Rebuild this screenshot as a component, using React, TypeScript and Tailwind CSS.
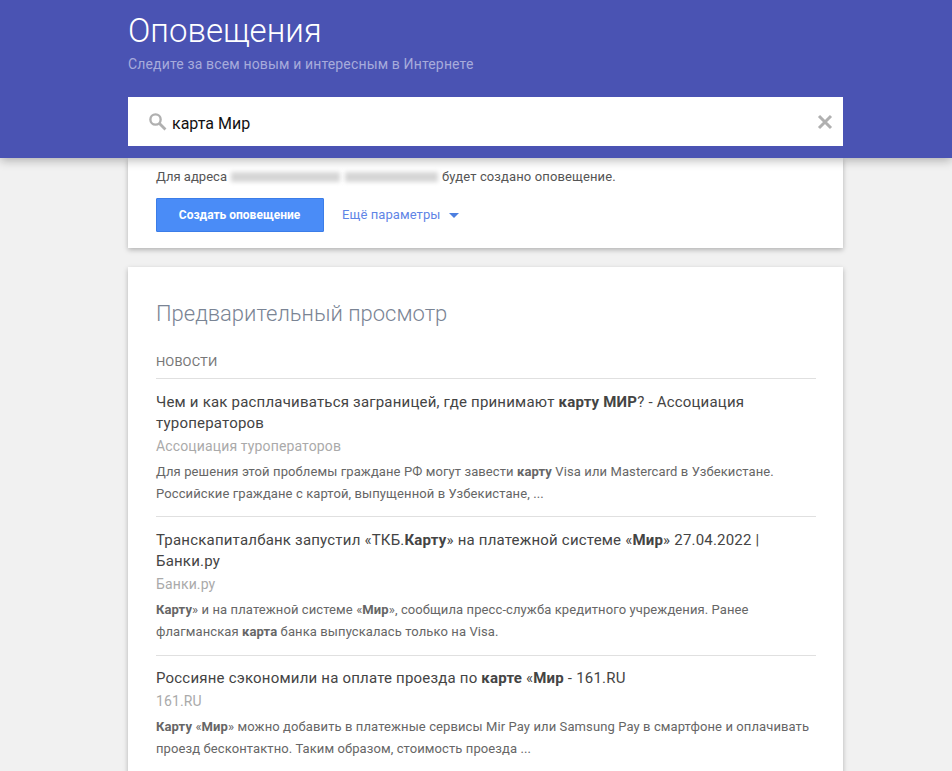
const font = { fontFamily: 'Roboto, "Noto Sans", sans-serif' }

type Story = {
    title: React.ReactNode
    source: string
    snippet: React.ReactNode
}

const stories: Story[] = [
    {
        title: <>Чем и как расплачиваться заграницей, где принимают <b className="font-bold">карту МИР</b>? - Ассоциация туроператоров</>,
        source: 'Ассоциация туроператоров',
        snippet: <>Для решения этой проблемы граждане РФ могут завести <b className="font-bold">карту</b> Visa или Mastercard в Узбекистане. Российские граждане с картой, выпущенной в Узбекистане, ...</>,
    },
    {
        title: <>Транскапиталбанк запустил «ТКБ.<b className="font-bold">Карту</b>» на платежной системе «<b className="font-bold">Мир</b>» 27.04.2022 | Банки.ру</>,
        source: 'Банки.ру',
        snippet: <><b className="font-bold">Карту</b>» и на платежной системе «<b className="font-bold">Мир</b>», сообщила пресс-служба кредитного учреждения. Ранее флагманская <b className="font-bold">карта</b> банка выпускалась только на Visa.</>,
    },
    {
        title: <>Россияне сэкономили на оплате проезда по <b className="font-bold">карте</b> «<b className="font-bold">Мир</b> - 161.RU</>,
        source: '161.RU',
        snippet: <><b className="font-bold">Карту</b> «<b className="font-bold">Мир</b>» можно добавить в платежные сервисы Mir Pay или Samsung Pay в смартфоне и оплачивать проезд бесконтактно. Таким образом, стоимость проезда ...</>,
    },
]

function NewsItem({ story, last }: { story: Story, last: boolean }) {
    return (
        <div className={`pt-[12.5px] pb-[11.8px] ${last ? '' : 'border-b border-[#e0e0e0]'}`}>
            <div className="text-[15px] leading-[21.5px] tracking-[0.2px] text-[#444444]">{story.title}</div>
            <div className="text-[14px] leading-[22px] mt-[0.5px] tracking-[0.14px] text-[#aaaaaa]">{story.source}</div>
            <div className="text-[13px] leading-[22px] mt-[3.5px] tracking-[0.1px] text-[#666666]">{story.snippet}</div>
        </div>
    )
}

export default function App() {
    return (
        <div style={font} className="h-screen overflow-hidden bg-[#f1f1f1]">
            <header className="relative z-10 h-[158px] bg-[#4a53b3] pl-[128px] shadow-[0_2px_10px_rgba(0,0,0,0.3)]">
                <div className="pt-[10px] text-[33px] leading-[42px] font-light text-white">Оповещения</div>
                <div className="mt-[2px] text-[14px] leading-[20px] tracking-[0.15px] text-[#a7abdb]">Следите за всем новым и интересным в Интернете</div>
                <div className="mt-[23px] flex h-[49px] w-[715px] items-center bg-white pl-[20px] pr-[10px]">
                    <svg viewBox="0 0 24 24" className="h-[19px] w-[19px] fill-none stroke-[#b0b0b0] stroke-[3]">
                        <circle cx="9.5" cy="9.5" r="6.5" />
                        <path d="M14.5 14.5 L22 22" strokeWidth="3.6" />
                    </svg>
                    <span className="ml-[5px] flex-1 pt-[5px] text-[16px] text-[#111111]">карта Мир</span>
                    <svg viewBox="0 0 16 16" className="h-[16px] w-[16px] fill-none stroke-[#b0b0b0] stroke-[3]">
                        <path d="M2 2 L14 14 M14 2 L2 14" />
                    </svg>
                </div>
            </header>

            <main className="ml-[128px] w-[715px]">
                <section className="h-[90px] bg-white pl-[28px] pr-[27px] pt-[10px] shadow-[0_2px_5px_rgba(0,0,0,0.26)]">
                    <div className="flex h-[17px] items-center text-[13px] tracking-[0.03px] text-[#555555]">
                        Для адреса
                        <span className="ml-[4px] h-[10px] w-[109px] bg-[#d6d6d6] blur-[2px]" />
                        <span className="ml-[5px] h-[10px] w-[93px] bg-[#d6d6d6] blur-[2px]" />
                        <span className="ml-[4px] tracking-[0.12px]">будет создано оповещение.</span>
                    </div>
                    <div className="mt-[13px] flex items-center">
                        <button className="h-[34px] w-[168px] rounded-[1px] border border-[#3b7de8] bg-[#4a8cf7] pr-[1px] text-[12px] font-bold text-white">Создать оповещение</button>
                        <span className="ml-[18px] text-[13px] tracking-[0.08px] text-[#5f85e6]">Ещё параметры</span>
                        <span className="ml-[9px] h-0 w-0 border-x-[5px] border-t-[5px] border-x-transparent border-t-[#4d7fe0]" />
                    </div>
                </section>

                <section className="mt-[19px] bg-white pl-[28px] pr-[27px] pt-[32px] pb-[40px] shadow-[0_2px_5px_rgba(0,0,0,0.26)]">
                    <h2 className="text-[22px] leading-[30px] font-light text-[#7a8494]">Предварительный просмотр</h2>
                    <div className="mt-[24px] border-b border-[#e0e0e0] pb-[8px] text-[13px] leading-[17px] tracking-[0.1px] text-[#777777]">НОВОСТИ</div>
                    {stories.map((story, i) => (
                        <NewsItem key={i} story={story} last={i === stories.length - 1} />
                    ))}
                </section>
            </main>
        </div>
    )
}
